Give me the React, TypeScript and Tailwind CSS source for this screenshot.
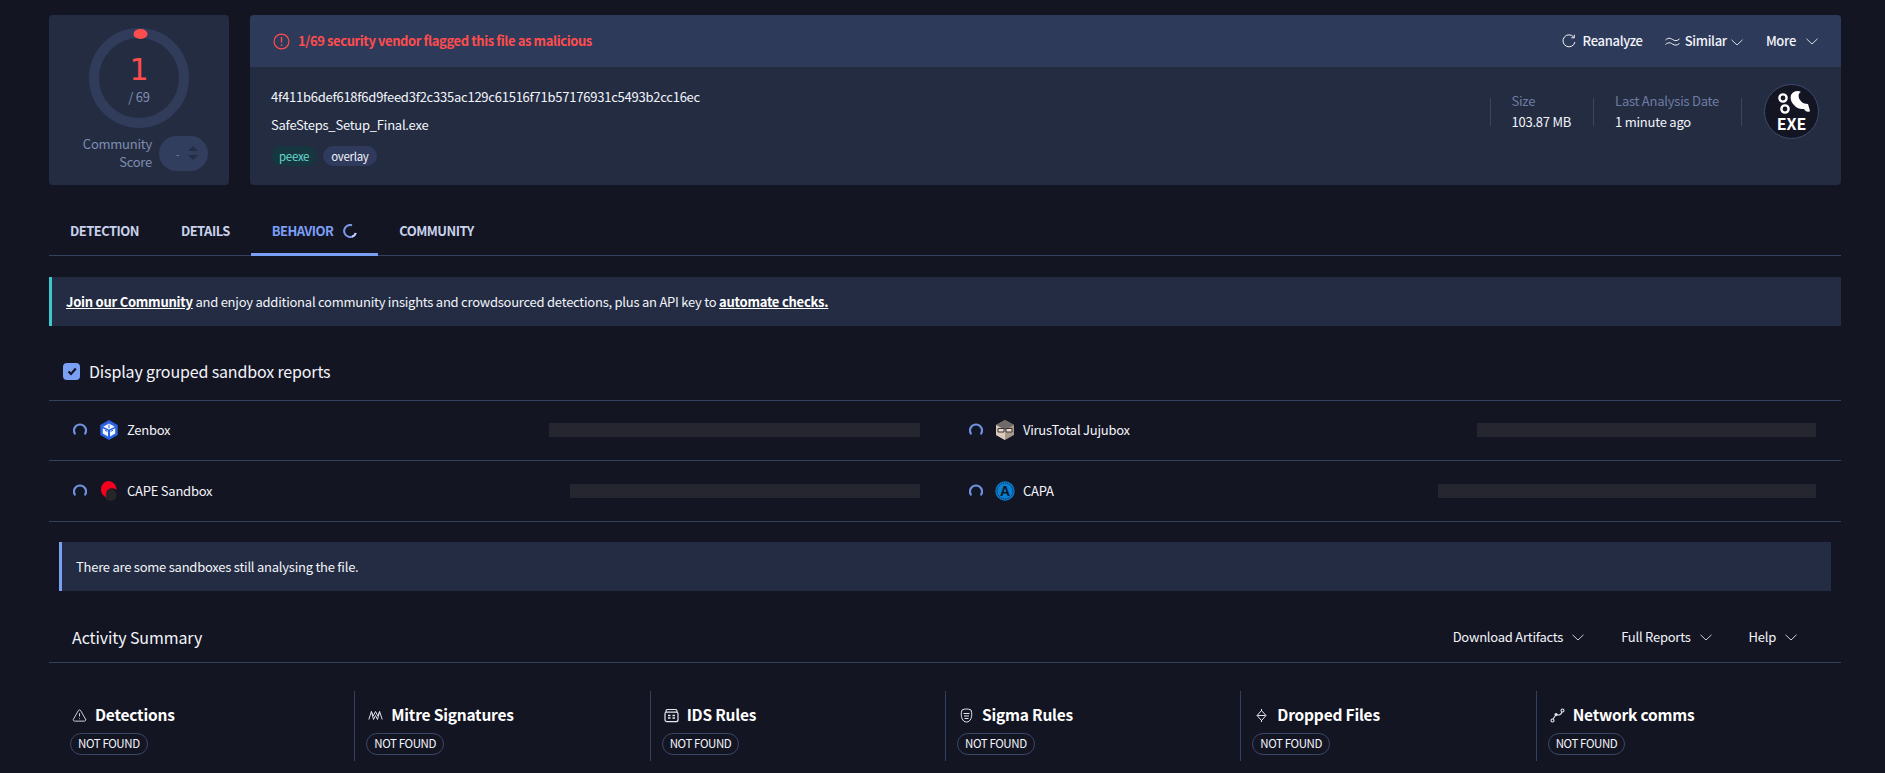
import { TriangleAlert } from "lucide-react";

const Chevron = ({ className = "" }: { className?: string }) => (
  <svg viewBox="0 0 12 7" fill="none" stroke="currentColor" strokeWidth="1" className={"h-[7px] w-[12px] " + className}>
    <path d="M0.5 0.8 6 6 11.5 0.8" />
  </svg>
);

const Spinner = () => (
  <svg viewBox="0 0 14 14" fill="none" stroke="#7090e0" strokeWidth="2.200" strokeLinecap="round" className="h-[14px] w-[14px] shrink-0">
    <path d="M1.800 10.500 A6 6 0 1 1 12.200 10.500" />
  </svg>
);

const TabSpinner = () => (
  <svg viewBox="0 0 14 14" fill="none" strokeWidth="2" className="h-[14px] w-[14px]">
    <path d="M9 1.300 A6 6 0 1 0 12.800 9" stroke="#7b9bea" />
    <path d="M12.800 9 A6 6 0 0 1 9 12.800" stroke="#c5d2f5" />
  </svg>
);

const ZenboxIcon = () => (
  <svg viewBox="0 0 20 20" className="h-5 w-5 shrink-0">
    <path d="M10 0 18.700 5v10L10 20 1.300 15V5z" fill="#2a62e0" />
    <path d="M10 3.400 15.800 6.700 10 9.400 4.200 6.700z" fill="#f2f6ff" />
    <path d="M3.800 8.200 9 10.700v5.800l-5.200-3zM16.200 8.200 11 10.700v5.800l5.200-3z" fill="#f2f6ff" />
    <path d="M10 4.600v3.400M6 10.300l2.400 1.200M14 10.300l-2.400 1.200" stroke="#2a62e0" strokeWidth="1" />
  </svg>
);

const CapeIcon = () => (
  <svg viewBox="0 0 20 20" className="h-5 w-5 shrink-0">
    <circle cx="11.500" cy="14" r="6" fill="#262629" />
    <path d="M9 0C14 0 17.500 3.500 17.500 9 15 6.500 11 6.500 8.500 9 7 11 6.500 13.500 7 16.500 3.500 14.500 2 11.500 2 8.500 2 4 5 .5 9 0z" fill="#f5001e" />
  </svg>
);

const JujuboxIcon = () => (
  <svg viewBox="0 0 20 20" className="h-5 w-5 shrink-0">
    <path d="M10 0 19 5v10l-9 5-9-5V5z" fill="#a8978b" />
    <path d="M10 0 19 5 10 10 1 5z" fill="#6f6a68" />
    <path d="M1 5 10 10v10L1 15z" fill="#d8cabd" />
    <path d="M3 8.500h6v3.500H3zM11 8.500h6v3.500h-6z" fill="#e6ddd6" stroke="#3a3230" strokeWidth="1" />
  </svg>
);

const CapaIcon = () => (
  <svg viewBox="0 0 20 20" className="h-5 w-5 shrink-0">
    <circle cx="10" cy="10" r="9.700" fill="#0b7fd0" />
    <circle cx="10" cy="10" r="8" fill="none" stroke="#0c1a30" strokeWidth="1" strokeDasharray="1.200 1" />
    <text x="10" y="15" textAnchor="middle" fontSize="14" fontWeight="700" fill="#0c1626" fontFamily="Liberation Sans, sans-serif">A</text>
  </svg>
);

const ExeLogo = () => (
  <div className="flex h-[55px] w-[55px] flex-col items-center justify-end rounded-full border border-[#3d4a6b] bg-[#141523] pb-[7px]">
    <svg viewBox="0 0 36 26" className="h-[26px] w-[36px]" fill="none">
      <circle cx="9" cy="7" r="3.600" stroke="#fff" strokeWidth="2.400" />
      <circle cx="11" cy="18" r="3.600" stroke="#fff" strokeWidth="2.400" />
      <path d="M17 4C19 0 24-1 27 1 24 2 24 6 26 9 28 12 31 13 34 13L36 20C34 22 31 20 30 18 27 18 23 18 20 14 17 11 16 7 17 4z" fill="#fff" />
    </svg>
    <span className="mt-[-1px] text-[16px] font-bold leading-[15px] tracking-normal text-white">EXE</span>
  </div>
);

const DetectIcon = () => <TriangleAlert strokeWidth={1.4} className="h-[15px] w-[15px] shrink-0 text-[#e4e7ef]" />;

const MitreIcon = () => (
  <svg viewBox="0 0 15 15" fill="none" stroke="#d8dce8" strokeWidth="1" className="h-[15px] w-[15px] shrink-0">
    <path d="M0.800 11.500 3.400 3.500 5.200 8 7.500 3.500 9.800 8 11.600 3.500 14.200 11.500M3.400 3.500 5.500 11.500 7.500 7.500 9.500 11.500 11.600 3.500" />
  </svg>
);

const IdsIcon = () => (
  <svg viewBox="0 0 15 15" fill="none" stroke="#e4e7ef" strokeWidth="1.200" className="h-[15px] w-[15px] shrink-0">
    <path d="M3.500 1.500h8a1.500 1.500 0 0 1 1.500 1.500v1.200M2 4.200V3a1.500 1.500 0 0 1 1.500-1.500M2.500 4.200h10a1.500 1.500 0 0 1 1.500 1.500v6a2 2 0 0 1-2 2H3a2 2 0 0 1-2-2v-6a1.500 1.500 0 0 1 1.500-1.500z" />
    <path d="M4 7.500h2.500M4 10h2.500M8.500 7.500H11M8.500 10H11" strokeWidth="1.300" />
  </svg>
);

const SigmaIcon = () => (
  <svg viewBox="0 0 15 15" fill="none" stroke="#e4e7ef" strokeWidth="1" className="h-[15px] w-[15px] shrink-0">
    <path d="M3 2C4.500 1.200 6 1 7.500 1S10.500 1.200 12 2C13 5 13 8 12 10.500 11 12.800 9.500 14 7.500 14S4 12.800 3 10.500C2 8 2 5 3 2z" />
    <path d="M4.500 5.500h6M5 8h5M5.500 10.500h4" />
  </svg>
);

const DroppedIcon = () => (
  <svg viewBox="0 0 15 15" fill="none" stroke="#e4e7ef" strokeWidth="1" className="h-[15px] w-[15px] shrink-0">
    <path d="M7.500 2.500 12 7.500 7.500 12.500 3 7.500z" />
    <path d="M3.500 7.500h8" />
    <path d="M7.500 1v2M7.500 12v2" />
  </svg>
);

const NetworkIcon = () => (
  <svg viewBox="0 0 15 15" fill="none" stroke="#e4e7ef" strokeWidth="1.100" className="h-[15px] w-[15px] shrink-0">
    <circle cx="2.500" cy="12.500" r="1.500" />
    <circle cx="12.500" cy="2.500" r="1.500" />
    <circle cx="6" cy="6.500" r="1" fill="#e4e7ef" />
    <path d="M3 11 5.500 7.500M7 6.500C8.500 7.500 11 7 12 4" />
  </svg>
);

const metrics = [
  { title: "Detections", Icon: DetectIcon },
  { title: "Mitre Signatures", Icon: MitreIcon },
  { title: "IDS Rules", Icon: IdsIcon },
  { title: "Sigma Rules", Icon: SigmaIcon },
  { title: "Dropped Files", Icon: DroppedIcon },
  { title: "Network comms", Icon: NetworkIcon },
];

const sandboxes = [
  { name: "Zenbox", Icon: ZenboxIcon, bar: "w-[371px]", row: "h-[60px]" },
  { name: "VirusTotal Jujubox", Icon: JujuboxIcon, bar: "w-[339px]", row: "h-[60px]" },
  { name: "CAPE Sandbox", Icon: CapeIcon, bar: "w-[350px]", row: "h-[61px]" },
  { name: "CAPA", Icon: CapaIcon, bar: "w-[378px]", row: "h-[61px]" },
];

export default function App() {
  return (
    <div className="h-[773px] overflow-hidden bg-[#141523] pl-[49px] pr-[44px] pt-[15px] font-['Noto_Sans_CJK_JP','Noto_Sans',sans-serif] text-[13px] tracking-[-0.24px] text-[#f2f4fa]">
      {/* File header */}
      <div className="flex gap-[21px]">
        <div className="flex h-[170px] w-[180px] flex-col items-center rounded-[4px] bg-[#242c42] pt-[13px]">
          <div className="relative h-[100px] w-[100px]">
            <svg viewBox="0 0 100 100" className="h-[100px] w-[100px]">
              <circle cx="50" cy="50" r="45" fill="none" stroke="#303c5a" strokeWidth="10" />
              <ellipse cx="51.500" cy="6" rx="7" ry="5" fill="#ff4d4d" />
            </svg>
            <div className="absolute inset-0 flex flex-col items-center pt-[27px]">
              <span className="font-['DejaVu_Sans',sans-serif] text-[30px] leading-[30px] tracking-normal text-[#ff4d4d]">1</span>
              <span className="mt-[3px] text-[13px] leading-[18px] text-[#7f8cb0]">/ 69</span>
            </div>
          </div>
          <div className="mt-[7px] flex items-center gap-[7px] self-end pr-[21px]">
            <div className="text-right text-[13px] leading-[18px] text-[#7f8cb0]">
              Community
              <br />
              Score
            </div>
            <div className="flex h-[35px] w-[49px] items-center justify-between rounded-full bg-[#323e5e] pl-[17px] pr-[10px]">
              <span className="text-[10px] text-[#7f8cb0]">-</span>
              <div className="flex flex-col gap-[4px]">
                <span className="h-0 w-0 border-x-[5px] border-b-[5px] border-x-transparent border-b-[#242d44]" />
                <span className="h-0 w-0 border-x-[5px] border-t-[5px] border-x-transparent border-t-[#242d44]" />
              </div>
            </div>
          </div>
        </div>

        <div className="h-[170px] flex-1 overflow-hidden rounded-[4px] bg-[#242c42]">
          <div className="flex h-[52px] items-center justify-between bg-[#2e3a5a] pl-[23px] pr-[23px]">
            <div className="flex items-center gap-[8px] font-semibold tracking-[-0.4px] text-[#ff4d4d]">
              <svg viewBox="0 0 16 16" fill="none" stroke="currentColor" strokeWidth="1.100" className="h-[17px] w-[17px]">
                <circle cx="8" cy="8" r="7" />
                <path d="M8 3.800v5.200M8 10.800v1.400" strokeWidth="1.300" />
              </svg>
              1/69 security vendor flagged this file as malicious
            </div>
            <div className="flex items-center font-medium tracking-[-0.3px]">
              <svg viewBox="0 0 14 14" fill="none" stroke="currentColor" strokeWidth="1" className="mr-[7px] h-[14px] w-[14px]">
                <path d="M11.800 3.200A6 6 0 1 0 12.900 8" />
                <path d="M12.300.8v3h-3" />
              </svg>
              Reanalyze
              <svg viewBox="0 0 15 9" fill="none" stroke="currentColor" strokeWidth="1" className="ml-[22px] mr-[5px] h-[9px] w-[15px]">
                <path d="M0.500 3C3 .8 5 .8 7.500 2.500S12 4 14.500 2M0.500 7.500C3 5.300 5 5.300 7.500 7S12 8.500 14.500 6.500" />
              </svg>
              Similar
              <Chevron className="ml-[4px] mt-[2px] text-[#d5d9e6]" />
              <span className="ml-[23px]">More</span>
              <Chevron className="ml-[10px] text-[#d5d9e6]" />
            </div>
          </div>
          <div className="flex justify-between pl-[21px] pr-[22px]">
            <div>
              <div className="mt-[20px] leading-[20px]">4f411b6def618f6d9feed3f2c335ac129c61516f71b57176931c5493b2cc16ec</div>
              <div className="mt-[8px] leading-[20px]">SafeSteps_Setup_Final.exe</div>
              <div className="mt-[11px] flex gap-[6px] text-[11.500px] leading-[20px] tracking-[-0.3px]">
                <span className="rounded-full bg-[#16373f] px-[8px] text-[#66d9cf]">peexe</span>
                <span className="rounded-full bg-[#2f3a5c] px-[8px] text-[#f2f4fa]">overlay</span>
              </div>
            </div>
            <div className="flex items-start pt-[17px]">
              <div className="mt-[14px] h-[28px] border-l border-[#3a4666] pl-[21px]">
                <div className="mt-[-7px] leading-[20px] text-[#6e7ca3]">Size</div>
                <div className="leading-[22px]">103.87 MB</div>
              </div>
              <div className="ml-[22px] mt-[14px] h-[28px] border-l border-[#3a4666] pl-[21px]">
                <div className="mt-[-7px] leading-[20px] text-[#6e7ca3]">Last Analysis Date</div>
                <div className="leading-[22px]">1 minute ago</div>
              </div>
              <div className="ml-[22px] mt-[14px] h-[28px] border-l border-[#3a4666]" />
              <div className="ml-[22px]">
                <ExeLogo />
              </div>
            </div>
          </div>
        </div>
      </div>

      {/* Tabs */}
      <div className="mt-[21px] flex h-[50px] items-stretch border-b border-[#33415f] font-semibold uppercase tracking-[-0.55px]">
        <div className="flex items-center px-[21px] text-[#c8d2ea]">Detection</div>
        <div className="flex items-center px-[21px] text-[#c8d2ea]">Details</div>
        <div className="-mb-px flex items-center gap-[10px] border-b-[3px] border-[#7b9ff5] px-[21px] pt-[3px] text-[#7b9ff5]">
          Behavior
          <TabSpinner />
        </div>
        <div className="flex items-center px-[21px] text-[#c8d2ea]">Community</div>
      </div>

      {/* Community banner */}
      <div className="mt-[21px] flex h-[49px] items-center border-l-[3px] border-[#3cc8cc] bg-[#232c42] pl-[14px]">
        <span>
          <a className="font-bold text-white underline">Join our Community</a> and enjoy additional community insights and crowdsourced detections, plus an API key to{" "}
          <a className="font-bold text-white underline">automate checks.</a>
        </span>
      </div>

      {/* Sandbox reports */}
      <div className="flex h-[75px] items-center gap-[9px] border-b border-[#33415f] pl-[14px] pt-[16px]">
        <span className="flex h-[17px] w-[17px] items-center justify-center rounded-[4px] bg-[#7b9ff5]">
          <svg viewBox="0 0 12 12" fill="none" stroke="#141523" strokeWidth="2.200" className="h-[12px] w-[12px]">
            <path d="M2.500 6.500 5 9 9.800 3.500" />
          </svg>
        </span>
        <span className="text-[16px] tracking-[-0.15px]">Display grouped sandbox reports</span>
      </div>
      <div className="grid grid-cols-2">
        {sandboxes.map(({ name, Icon, bar, row }) => (
          <div key={name} className={"flex items-center border-b border-[#33415f] pb-[1px] pl-[24px] pr-[25px] " + row}>
            <Spinner />
            <span className="ml-[12px]">
              <Icon />
            </span>
            <span className="ml-[8px]">{name}</span>
            <div className={"ml-auto h-[14px] bg-[#25262f] " + bar} />
          </div>
        ))}
      </div>

      {/* Notice */}
      <div className="mx-[10px] mt-[20px] flex h-[49px] items-center border-l-[3px] border-[#7b9ff5] bg-[#232c42] pl-[14px]">
        There are some sandboxes still analysing the file.
      </div>

      {/* Activity summary */}
      <div className="flex h-[72px] items-center justify-between border-b border-[#33415f] pl-[23px] pr-[44px] pt-[21px]">
        <span className="text-[16px] tracking-[-0.1px]">Activity Summary</span>
        <div className="flex items-center">
          Download Artifacts
          <Chevron className="ml-[9px] text-[#c8ccd8]" />
          <span className="ml-[37px]">Full Reports</span>
          <Chevron className="ml-[9px] text-[#c8ccd8]" />
          <span className="ml-[37px]">Help</span>
          <Chevron className="ml-[9px] text-[#c8ccd8]" />
        </div>
      </div>
      <div className="mx-[10px] mt-[28px] grid grid-cols-6">
        {metrics.map(({ title, Icon }, i) => (
          <div key={title} className={"h-[70px] pl-[11px] pt-[13px] " + (i > 0 ? "border-l border-[#33415f]" : "")}>
            <div className="flex h-[22px] items-center gap-[8px] pl-[2px] text-[15.500px] font-semibold tracking-[-0.2px] text-white">
              <Icon />
              {title}
            </div>
            <div className="mt-[7px] inline-flex h-[22px] items-center rounded-full border border-[#3a4666] px-[7px] text-[11.500px] tracking-[-0.4px] text-[#f2f4fa]">NOT FOUND</div>
          </div>
        ))}
      </div>
    </div>
  );
}
